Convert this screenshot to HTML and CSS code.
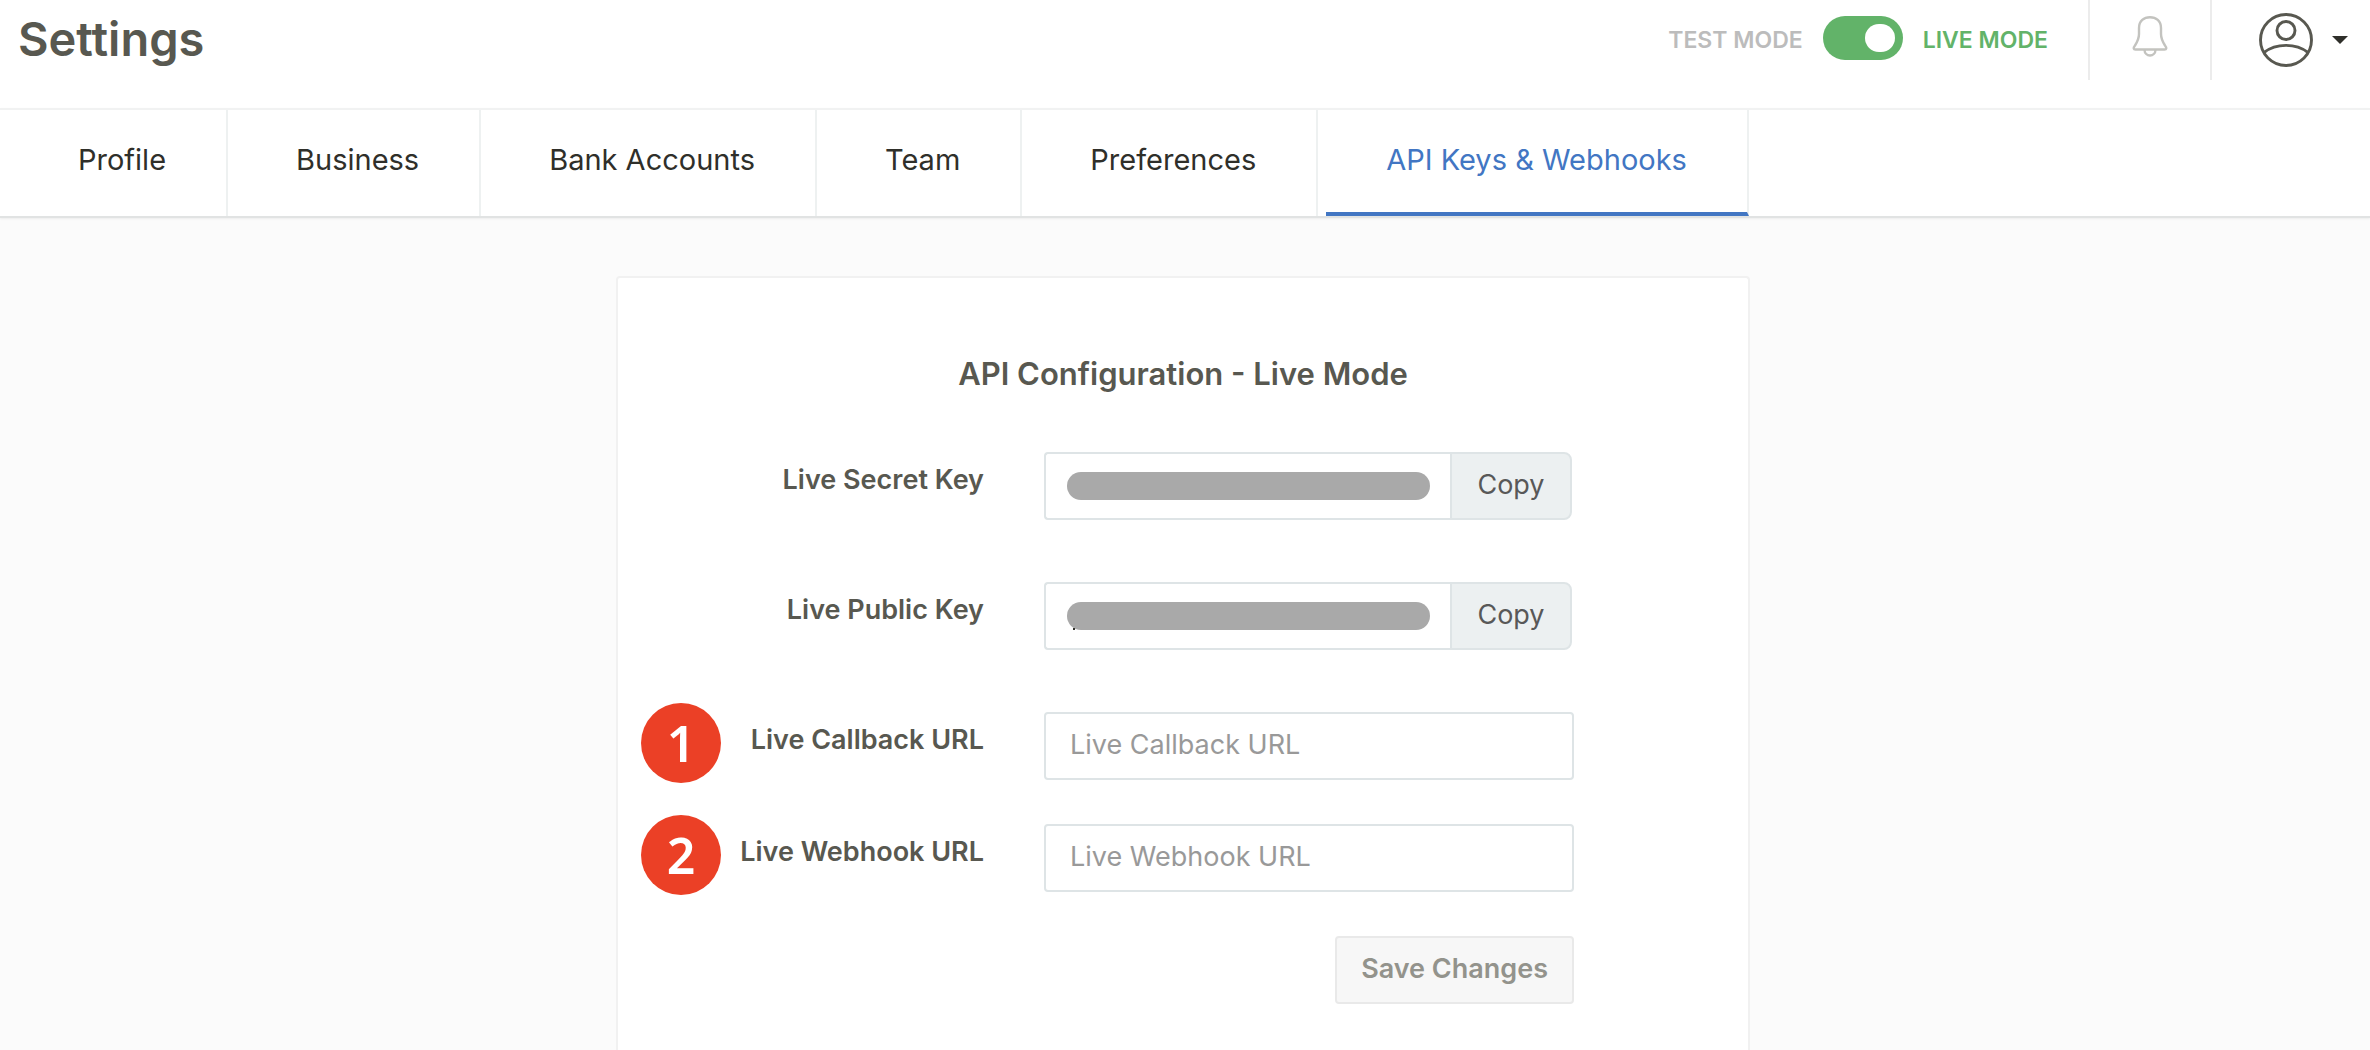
FILE: index.html
```html
<!DOCTYPE html>
<html lang="en">
<head>
<meta charset="utf-8">
<meta name="viewport" content="width=device-width, initial-scale=1">
<title>Settings</title>
<link rel="stylesheet" href="styles.css">
</head>
<body>
<header class="topbar">
  <h1 class="page-title">Settings</h1>
  <div class="topbar-tools">
    <div class="mode">
      <span class="mode-test">TEST MODE</span>
      <input class="mode-switch" type="checkbox" id="mode" checked>
      <label class="mode-live" for="mode">LIVE MODE</label>
    </div>
    <button class="tool tool-bell" type="button" aria-label="Notifications">
      <svg width="36" height="42" viewBox="0 0 36 42" fill="none" stroke="#c3c3bf" stroke-width="2.400" stroke-linejoin="round">
        <path d="M7 13C7 6 12 2.200 18 2.200S29 6 29 13V19C29 24 30.500 26.500 33 30.500C35 33 34.500 34.500 32.500 34.500H3.500C1.500 34.500 1 33 3 30.500C5.500 26.500 7 24 7 19Z"/>
        <path d="M12.500 34.500C12.500 42.500 23.500 42.500 23.500 34.500"/>
      </svg>
    </button>
    <button class="tool tool-user" type="button" aria-label="Account">
      <svg width="54" height="54" viewBox="0 0 54 54" fill="none" stroke="#585850" stroke-width="2.900">
        <circle cx="27" cy="27" r="25.500"/>
        <circle cx="27" cy="17.500" r="9"/>
        <path d="M5 39.500C17 30 37 30 49 39.500"/>
      </svg>
      <svg width="16" height="8" viewBox="0 0 16 8"><path d="M0 0H16L8 8Z" fill="#2f2f2a"/></svg>
    </button>
  </div>
</header>
<nav class="tabs">
  <a class="tab" href="#profile">Profile</a>
  <a class="tab" href="#business">Business</a>
  <a class="tab" href="#bank">Bank Accounts</a>
  <a class="tab" href="#team">Team</a>
  <a class="tab" href="#preferences">Preferences</a>
  <a class="tab tab-active" href="#api">API Keys &amp; Webhooks</a>
</nav>
<main class="content">
  <form class="card">
    <h2 class="card-title">API Configuration - Live Mode</h2>
    <div class="row row-key">
      <label class="row-label" for="secret">Live Secret Key</label>
      <div class="key">
        <input class="field key-field" id="secret" type="text" readonly>
        <span class="mask"></span>
        <button class="copy" type="button">Copy</button>
      </div>
    </div>
    <div class="row row-key">
      <label class="row-label" for="public">Live Public Key</label>
      <div class="key">
        <input class="field key-field" id="public" type="text" readonly>
        <span class="mask mask-tail"></span>
        <button class="copy" type="button">Copy</button>
      </div>
    </div>
    <div class="row">
      <span class="badge">1</span>
      <label class="row-label" for="callback">Live Callback URL</label>
      <input class="field" id="callback" type="text" placeholder="Live Callback URL">
    </div>
    <div class="row">
      <span class="badge">2</span>
      <label class="row-label" for="webhook">Live Webhook URL</label>
      <input class="field" id="webhook" type="text" placeholder="Live Webhook URL">
    </div>
    <div class="actions">
      <button class="save" type="submit" disabled>Save Changes</button>
    </div>
  </form>
</main>
</body>
</html>
```
FILE: styles.css
```css
* {
  box-sizing: border-box;
}

body {
  display: flex;
  flex-direction: column;
  min-height: 100vh;
  margin: 0;
  background: #fbfbfb;
  color: #585850;
  font-family: Inter, "Liberation Sans", sans-serif;
  font-size: 27px;
}

button,
input {
  margin: 0;
  font: inherit;
}

.topbar {
  display: flex;
  justify-content: space-between;
  align-items: flex-start;
  height: 108px;
  padding-left: 18px;
  background: #fff;
}

.page-title {
  margin: 0;
  font-size: 47px;
  font-weight: 600;
  line-height: 78px;
}

.topbar-tools,
.mode {
  display: flex;
  align-items: center;
}

.mode {
  gap: 20px;
  padding-right: 40px;
  font-size: 23px;
  font-weight: 600;
}

.mode-test {
  color: #bcbcbc;
}

.mode-live {
  color: #62b369;
}

.mode-switch {
  display: flex;
  align-items: center;
  justify-content: flex-end;
  appearance: none;
  width: 80px;
  height: 44px;
  margin-bottom: 4px;
  padding: 8px;
  border-radius: 22px;
  background: #62b369;
}

.mode-switch::before {
  content: "";
  width: 30px;
  height: 28px;
  border-radius: 14px;
  background: #fff;
}

.tool {
  display: flex;
  align-items: center;
  justify-content: center;
  height: 80px;
  padding: 0;
  border: 0;
  border-left: 2px solid #ececec;
  background: none;
}

.tool-bell {
  width: 122px;
  padding-bottom: 8px;
}

.tool-user {
  gap: 19px;
  width: 160px;
  padding-left: 24px;
}

.tabs {
  display: flex;
  gap: 8px;
  height: 110px;
  padding-left: 18px;
  border-top: 2px solid #f1f2f2;
  border-bottom: 2px solid #e1e3e3;
  background: #fff;
  box-shadow: 0 1px 2px rgba(0, 0, 0, 0.06);
}

.tab {
  padding: 0 60px;
  border-right: 2px solid #eef1f1;
  color: #2f2f2a;
  font-size: 29px;
  line-height: 100px;
  text-decoration: none;
  white-space: nowrap;
}

.tab-active {
  border-bottom: 4px solid #4276c3;
  color: #4276c3;
}

.content {
  display: flex;
  flex: 1;
  justify-content: center;
  padding: 58px 4px 0 0;
}

.card {
  width: 1134px;
  max-width: 100%;
  padding: 70px 174px 42px 0;
  border: 2px solid #f1f1f1;
  border-bottom: 0;
  border-radius: 4px 4px 0 0;
  background: #fff;
}

.card-title {
  margin: 0 0 52px 174px;
  font-size: 31px;
  font-weight: 600;
  line-height: 52px;
  text-align: center;
}

.row {
  display: grid;
  grid-template-columns: 1fr 530px;
  column-gap: 60px;
  position: relative;
  margin-bottom: 44px;
}

.row-key {
  margin-bottom: 62px;
}

.row-label {
  grid-column: 1;
  font-weight: 600;
  line-height: 56px;
  text-align: right;
}

.badge {
  display: flex;
  align-items: center;
  justify-content: center;
  position: absolute;
  top: -9px;
  left: 23px;
  width: 80px;
  height: 80px;
  border-radius: 50%;
  background: #eb4026;
  color: #fff;
  font-family: "Noto Sans", sans-serif;
  font-size: 50px;
  font-weight: 600;
}

.field {
  grid-column: 2;
  width: 100%;
  height: 68px;
  padding: 0 24px 4px;
  border: 2px solid #dee4e6;
  border-radius: 4px;
  outline: 0;
  background: #fff;
  color: #2f2f2a;
}

.field::placeholder {
  color: #999;
  opacity: 1;
}

.key {
  display: flex;
  position: relative;
  padding-right: 2px;
}

.key-field {
  flex: 1;
  min-width: 0;
  border-right: 0;
  border-radius: 4px 0 0 4px;
}

.mask {
  position: absolute;
  top: 20px;
  left: 23px;
  width: 363px;
  height: 28px;
  border-radius: 14px;
  background: #a9a9a9;
}

.mask-tail::before {
  content: "";
  position: absolute;
  bottom: 0;
  left: 6px;
  width: 2px;
  height: 2px;
  background: #2f2f2a;
}

.copy {
  width: 122px;
  padding: 0 0 4px;
  border: 2px solid #dee4e6;
  border-radius: 0 8px 8px 0;
  background: #ecf0f1;
  color: #585858;
}

.actions {
  display: flex;
  justify-content: flex-end;
}

.save {
  height: 68px;
  padding: 0 24px 4px;
  border: 2px solid #e9e9e9;
  border-radius: 4px;
  background: #f7f7f7;
  color: #93938c;
  font-weight: 600;
}
```
